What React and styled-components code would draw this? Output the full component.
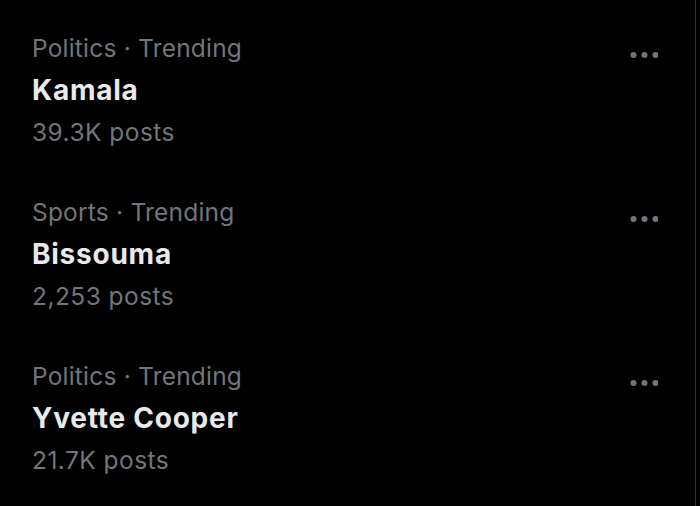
import React from 'react';
import styled, { createGlobalStyle } from 'styled-components';

const GlobalStyle = createGlobalStyle`
  html, body {
    margin: 0;
    padding: 0;
    background: #000;
  }
  body {
    font-family: Inter, "Noto Sans", sans-serif;
    -webkit-font-smoothing: antialiased;
  }
`;

const TrendList = styled.div`
  width: 695px;
  min-height: 498px;
  box-sizing: content-box;
  border-right: 1px solid #2f3336;
  padding-top: 8px;
  background: #000;
`;

const TrendItem = styled.div`
  display: flex;
  justify-content: space-between;
  align-items: flex-start;
  padding: 19px 37px 19px 32px;
`;

const TrendText = styled.div`
  display: flex;
  flex-direction: column;
`;

const Meta = styled.div`
  font-size: 24.5px;
  line-height: 42px;
  color: #71767b;
  letter-spacing: ${(p) => p.$spacing || '0.45px'};
  white-space: nowrap;
`;

const TrendName = styled.div`
  font-size: 28px;
  line-height: 42px;
  font-weight: 700;
  color: #e7e9ea;
  letter-spacing: 0.75px;
  white-space: nowrap;
`;

const MoreButton = styled.div`
  margin-top: 24px;
  display: flex;
`;

const DotsIcon = () => (
  <svg width="28" height="8" viewBox="0 0 28 8">
    <circle cx="3.5" cy="4" r="3" fill="#71767b" />
    <circle cx="14.5" cy="4" r="3" fill="#71767b" />
    <circle cx="25.5" cy="4" r="3" fill="#71767b" />
  </svg>
);

const trends = [
  { category: 'Politics', name: 'Kamala', posts: '39.3K posts' },
  { category: 'Sports', name: 'Bissouma', posts: '2,253 posts' },
  { category: 'Politics', name: 'Yvette Cooper', posts: '21.7K posts' },
];

const App = () => {
  return (
    <>
      <GlobalStyle />
      <TrendList>
        {trends.map((t) => (
          <TrendItem key={t.name}>
            <TrendText>
              <Meta $spacing="0.2px">{t.category} · Trending</Meta>
              <TrendName>{t.name}</TrendName>
              <Meta>{t.posts}</Meta>
            </TrendText>
            <MoreButton>
              <DotsIcon />
            </MoreButton>
          </TrendItem>
        ))}
      </TrendList>
    </>
  );
};

export default App;
